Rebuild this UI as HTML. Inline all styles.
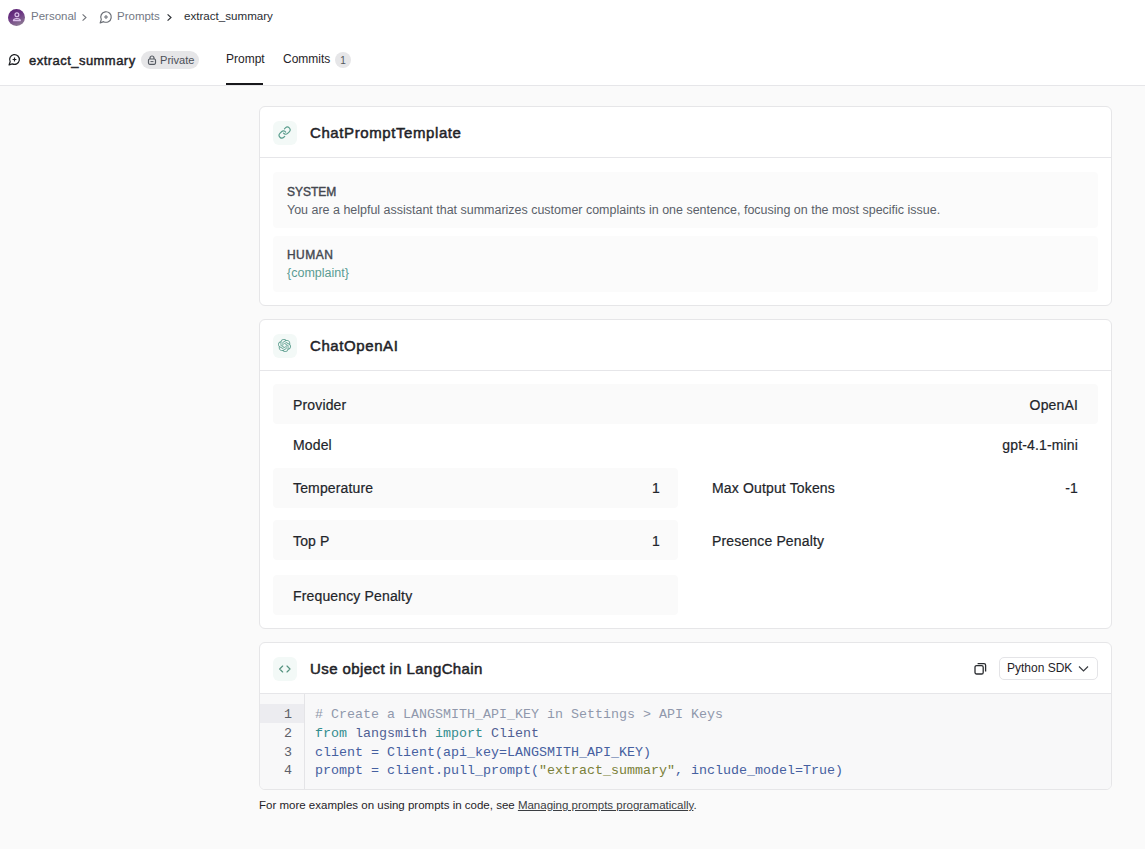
<!DOCTYPE html>
<html><head><meta charset="utf-8">
<style>
*{box-sizing:border-box;margin:0;padding:0}
html,body{width:1145px;height:849px;overflow:hidden;background:#fafafa;font-family:"Liberation Sans",sans-serif;color:#1f2328}
.a{position:absolute;white-space:nowrap;line-height:1}
.hdr{position:absolute;left:0;top:0;width:1145px;height:86px;background:#fff;border-bottom:1px solid #e6e6e9}
.crumb{font-size:11.5px;color:#737884}
.card{position:absolute;left:259px;width:853px;background:#fff;border:1px solid #e6e6e8;border-radius:6px}
.hline{position:absolute;left:260px;width:851px;height:1px;background:#e6e6e9}
.ibox{position:absolute;left:273px;width:24px;height:24px;border-radius:6px;background:#f3f9f7}
.ctitle{left:310px;font-size:15px;color:#1f2328;letter-spacing:0.59px;-webkit-text-stroke:0.5px #1f2328}
.msg{position:absolute;left:273px;width:825px;height:56px;background:#fbfbfb;border-radius:4px}
.role{left:287px;font-size:12px;color:#44474f;-webkit-text-stroke:0.4px #44474f}
.mtxt{left:287px;font-size:12.5px;color:#5a5f69}
.box{position:absolute;height:40px;border-radius:4px;background:#fafafa}
.lab{font-size:14px;color:#22252a;letter-spacing:0.15px;-webkit-text-stroke:0.2px #22252a}
.val{font-size:14px;color:#22252a;letter-spacing:0.15px;-webkit-text-stroke:0.2px #22252a}
.mono{font-family:"Liberation Mono",monospace;font-size:13.33px;line-height:18.75px}
</style></head><body>
<div class="hdr"></div>

<!-- breadcrumb -->
<div class="a" style="left:8px;top:9px;width:17px;height:17px;border-radius:50%;background:linear-gradient(155deg,#551c6e 0%,#6c3584 40%,#8a7592 85%,#9a8f9c 100%)"></div>
<svg class="a" style="left:8px;top:9px" width="17" height="17" viewBox="0 0 17 17"><circle cx="8.9" cy="5.8" r="1.9" fill="none" stroke="#dcc0ea" stroke-width="1.2"/><path d="M5.4 11.6 Q5.6 9.6 8.9 9.6 Q12.2 9.6 12.4 11.6 Z" fill="none" stroke="#dcc0ea" stroke-width="1.2" stroke-linejoin="round"/></svg>
<div class="a crumb" style="left:31px;top:11px">Personal</div>
<svg class="a" style="left:80px;top:13px" width="8" height="9" viewBox="0 0 8 9"><path d="M2.6 1.3 L6 4.5 L2.6 7.7" fill="none" stroke="#6f7278" stroke-width="1.05"/></svg>
<svg class="a" style="left:99px;top:10px" width="14" height="14" viewBox="0 0 24 24"><path d="M7.9 20A9 9 0 1 0 4 16.1L2 22Z" fill="none" stroke="#6b6f76" stroke-width="2" stroke-linejoin="round"/><path d="M8.6 12h6.8M12 8.6v6.8" stroke="#6b6f76" stroke-width="1.8"/></svg>
<div class="a crumb" style="left:117px;top:11px">Prompts</div>
<svg class="a" style="left:165px;top:13px" width="8" height="9" viewBox="0 0 8 9"><path d="M2.6 1.3 L6 4.5 L2.6 7.7" fill="none" stroke="#2c2f34" stroke-width="1.15"/></svg>
<div class="a crumb" style="left:184px;top:10px;color:#2a2d33;font-size:11.6px">extract_summary</div>

<!-- title row -->
<svg class="a" style="left:8px;top:53px" width="13" height="13" viewBox="0 0 24 24"><path d="M7.9 20A9 9 0 1 0 4 16.1L2 22Z" fill="none" stroke="#1b1d21" stroke-width="2.3" stroke-linejoin="round"/><path d="M8.5 12h7M12 8.5v7" stroke="#1b1d21" stroke-width="2.2"/></svg>
<div class="a" style="left:29px;top:54px;font-size:13px;color:#1f2328;letter-spacing:0.46px;-webkit-text-stroke:0.45px #1f2328">extract_summary</div>
<div class="a" style="left:141px;top:51px;width:58px;height:18px;border-radius:9px;background:#e6e6e8"></div>
<svg class="a" style="left:147px;top:55px" width="10" height="10" viewBox="0 0 10 10"><path d="M3 4V3a2 2 0 0 1 4 0v1" fill="none" stroke="#555a62" stroke-width="1.2"/><rect x="1.5" y="4" width="7" height="5.3" rx="1.2" fill="none" stroke="#555a62" stroke-width="1.2"/><path d="M3.5 6.6h3" stroke="#555a62" stroke-width="1"/></svg>
<div class="a" style="left:160px;top:55px;font-size:11.1px;color:#4b4f57">Private</div>
<div class="a" style="left:226px;top:53px;font-size:12px;color:#1f2328">Prompt</div>
<div class="a" style="left:226px;top:83px;width:37px;height:2px;background:#18181b"></div>
<div class="a" style="left:283px;top:53px;font-size:12px;color:#1f2328">Commits</div>
<div class="a" style="left:335px;top:52px;width:16px;height:16px;border-radius:50%;background:#e6e6e8;font-size:10px;color:#52565c;text-align:center;line-height:18px">1</div>

<!-- card 1 -->
<div class="card" style="top:106px;height:200px"></div>
<div class="hline" style="top:157px"></div>
<div class="ibox" style="top:121px"></div>
<svg class="a" style="left:278.3px;top:126px" width="13.2" height="13.2" viewBox="0 0 24 24" fill="none" stroke="#5a9d8d" stroke-width="2.1" stroke-linecap="round"><path d="M10 13a5 5 0 0 0 7.54.54l3-3a5 5 0 0 0-7.07-7.07l-1.72 1.71"/><path d="M14 11a5 5 0 0 0-7.54-.54l-3 3a5 5 0 0 0 7.07 7.07l1.71-1.71"/></svg>
<div class="a ctitle" style="top:125px">ChatPromptTemplate</div>
<div class="msg" style="top:172px"></div>
<div class="a role" style="top:186px">SYSTEM</div>
<div class="a mtxt" style="top:204px;left:287px;font-size:12.48px">You are a helpful assistant that summarizes customer complaints in one sentence, focusing on the most specific issue.</div>
<div class="msg" style="top:236px"></div>
<div class="a role" style="top:249px;letter-spacing:0.45px">HUMAN</div>
<div class="a mtxt" style="top:267px;color:#5a9b93">{complaint}</div>

<!-- card 2 -->
<div class="card" style="top:319px;height:310px"></div>
<div class="hline" style="top:370px"></div>
<div class="ibox" style="top:334px"></div>
<svg class="a" style="left:278.2px;top:338.8px" width="13" height="13" viewBox="0 0 24 24"><path fill="#5f9f90" d="M22.2819 9.8211a5.9847 5.9847 0 0 0-.5157-4.9108 6.0462 6.0462 0 0 0-6.5098-2.9A6.0651 6.0651 0 0 0 4.9807 4.1818a5.9847 5.9847 0 0 0-3.9977 2.9 6.0462 6.0462 0 0 0 .7427 7.0966 5.98 5.98 0 0 0 .511 4.9107 6.051 6.051 0 0 0 6.5146 2.9001A5.9847 5.9847 0 0 0 13.2599 24a6.0557 6.0557 0 0 0 5.7718-4.2058 5.9894 5.9894 0 0 0 3.9977-2.9001 6.0557 6.0557 0 0 0-.7475-7.0729zm-9.022 12.6081a4.4755 4.4755 0 0 1-2.8764-1.0408l.1419-.0804 4.7783-2.7582a.7948.7948 0 0 0 .3927-.6813v-6.7369l2.02 1.1686a.071.071 0 0 1 .038.052v5.5826a4.504 4.504 0 0 1-4.4945 4.4944zm-9.6607-4.1254a4.4708 4.4708 0 0 1-.5346-3.0137l.142.0852 4.783 2.7582a.7712.7712 0 0 0 .7806 0l5.8428-3.3685v2.3324a.0804.0804 0 0 1-.0332.0615L9.74 19.9502a4.4992 4.4992 0 0 1-6.1408-1.6464zM2.3408 7.8956a4.485 4.485 0 0 1 2.3655-1.9728V11.6a.7664.7664 0 0 0 .3879.6765l5.8144 3.3543-2.0201 1.1685a.0757.0757 0 0 1-.071 0l-4.8303-2.7865A4.504 4.504 0 0 1 2.3408 7.872zm16.5963 3.8558L13.1038 8.364 15.1192 7.2a.0757.0757 0 0 1 .071 0l4.8303 2.7913a4.4944 4.4944 0 0 1-.6765 8.1042v-5.6772a.79.79 0 0 0-.407-.667zm2.0107-3.0231l-.142-.0852-4.7735-2.7818a.7759.7759 0 0 0-.7854 0L9.409 9.2297V6.8974a.0662.0662 0 0 1 .0284-.0615l4.8303-2.7866a4.4992 4.4992 0 0 1 6.6802 4.66zM8.3065 12.863l-2.02-1.1638a.0804.0804 0 0 1-.038-.0567V6.0742a4.4992 4.4992 0 0 1 7.3757-3.4537l-.142.0805L8.704 5.459a.7948.7948 0 0 0-.3927.6813zm1.0976-2.3654l2.602-1.4998 2.6069 1.4998v2.9994l-2.5974 1.4997-2.6067-1.4997Z"/></svg>
<div class="a ctitle" style="top:338px">ChatOpenAI</div>

<div class="box" style="left:273px;top:384px;width:825px"></div>
<div class="a lab" style="left:293px;top:398px">Provider</div>
<div class="a val" style="right:67px;top:398px">OpenAI</div>
<div class="a lab" style="left:293px;top:438px">Model</div>
<div class="a val" style="right:67px;top:438px">gpt-4.1-mini</div>

<div class="box" style="left:273px;top:468px;width:405px"></div>
<div class="a lab" style="left:293px;top:481px">Temperature</div>
<div class="a val" style="right:485px;top:481px">1</div>
<div class="a lab" style="left:712px;top:481px">Max Output Tokens</div>
<div class="a val" style="right:67px;top:481px">-1</div>

<div class="box" style="left:273px;top:520px;width:405px"></div>
<div class="a lab" style="left:293px;top:534px">Top P</div>
<div class="a val" style="right:485px;top:534px">1</div>
<div class="a lab" style="left:712px;top:534px">Presence Penalty</div>

<div class="box" style="left:273px;top:575px;width:405px"></div>
<div class="a lab" style="left:293px;top:589px">Frequency Penalty</div>

<!-- card 3 -->
<div class="card" style="top:642px;height:148px;overflow:hidden">
  <div style="position:absolute;left:0;top:51px;width:851px;height:95px;background:#f8f8f9"></div>
  <div style="position:absolute;left:0;top:61px;width:44px;height:19px;background:#ececf0"></div>
  <div style="position:absolute;left:44px;top:51px;width:1px;height:95px;background:#e4e4e7"></div>
</div>
<div class="hline" style="top:693px"></div>
<div class="ibox" style="top:657px"></div>
<svg class="a" style="left:277px;top:661px" width="16" height="16" viewBox="0 0 24 24" fill="none" stroke="#55927f" stroke-width="1.75" stroke-linecap="round" stroke-linejoin="round"><polyline points="15 16.5 19.5 12 15 7.5"/><polyline points="8.5 7.5 4 12 8.5 16.5"/></svg>
<div class="a ctitle" style="top:661px;letter-spacing:0.41px">Use object in LangChain</div>
<svg class="a" style="left:974px;top:662px" width="13" height="13" viewBox="0 0 13 13" fill="none" stroke="#2b2d31" stroke-width="1.3"><rect x="1" y="3.6" width="8.2" height="8.4" rx="1.6"/><path d="M3.6 1.6 H10 A1.6 1.6 0 0 1 11.6 3.2 V9.4"/></svg>
<div class="a" style="left:999px;top:657px;width:99px;height:23px;border:1px solid #e4e4e7;border-radius:5px;background:#fff"></div>
<div class="a" style="left:1007px;top:662px;font-size:12px;color:#1f2328">Python SDK</div>
<svg class="a" style="left:1078px;top:664px" width="11" height="9" viewBox="0 0 11 9"><path d="M1 2.5 L5.5 7 L10 2.5" fill="none" stroke="#3a3d42" stroke-width="1.2"/></svg>

<div class="a mono" style="left:260px;top:706px;width:32px;text-align:right;color:#5c6068">1<br>2<br>3<br>4</div>
<div class="a mono" style="left:315px;top:706px;color:#4660a0"><span style="color:#9098ac"># Create a LANGSMITH_API_KEY in Settings &gt; API Keys</span><br><span style="color:#338d8e">from</span> <span style="color:#505f94">langsmith</span> <span style="color:#338d8e">import</span> <span style="color:#505f94">Client</span><br>client = Client(api_key=LANGSMITH_API_KEY)<br>prompt = client.pull_prompt(<span style="color:#7a8038">"extract_summary"</span>, include_model=True)</div>

<div class="a" style="left:259px;top:800px;font-size:11.5px;color:#1f2328">For more examples on using prompts in code, see <span style="text-decoration:underline;color:#3a3d42">Managing prompts programatically</span>.</div>
</body></html>
